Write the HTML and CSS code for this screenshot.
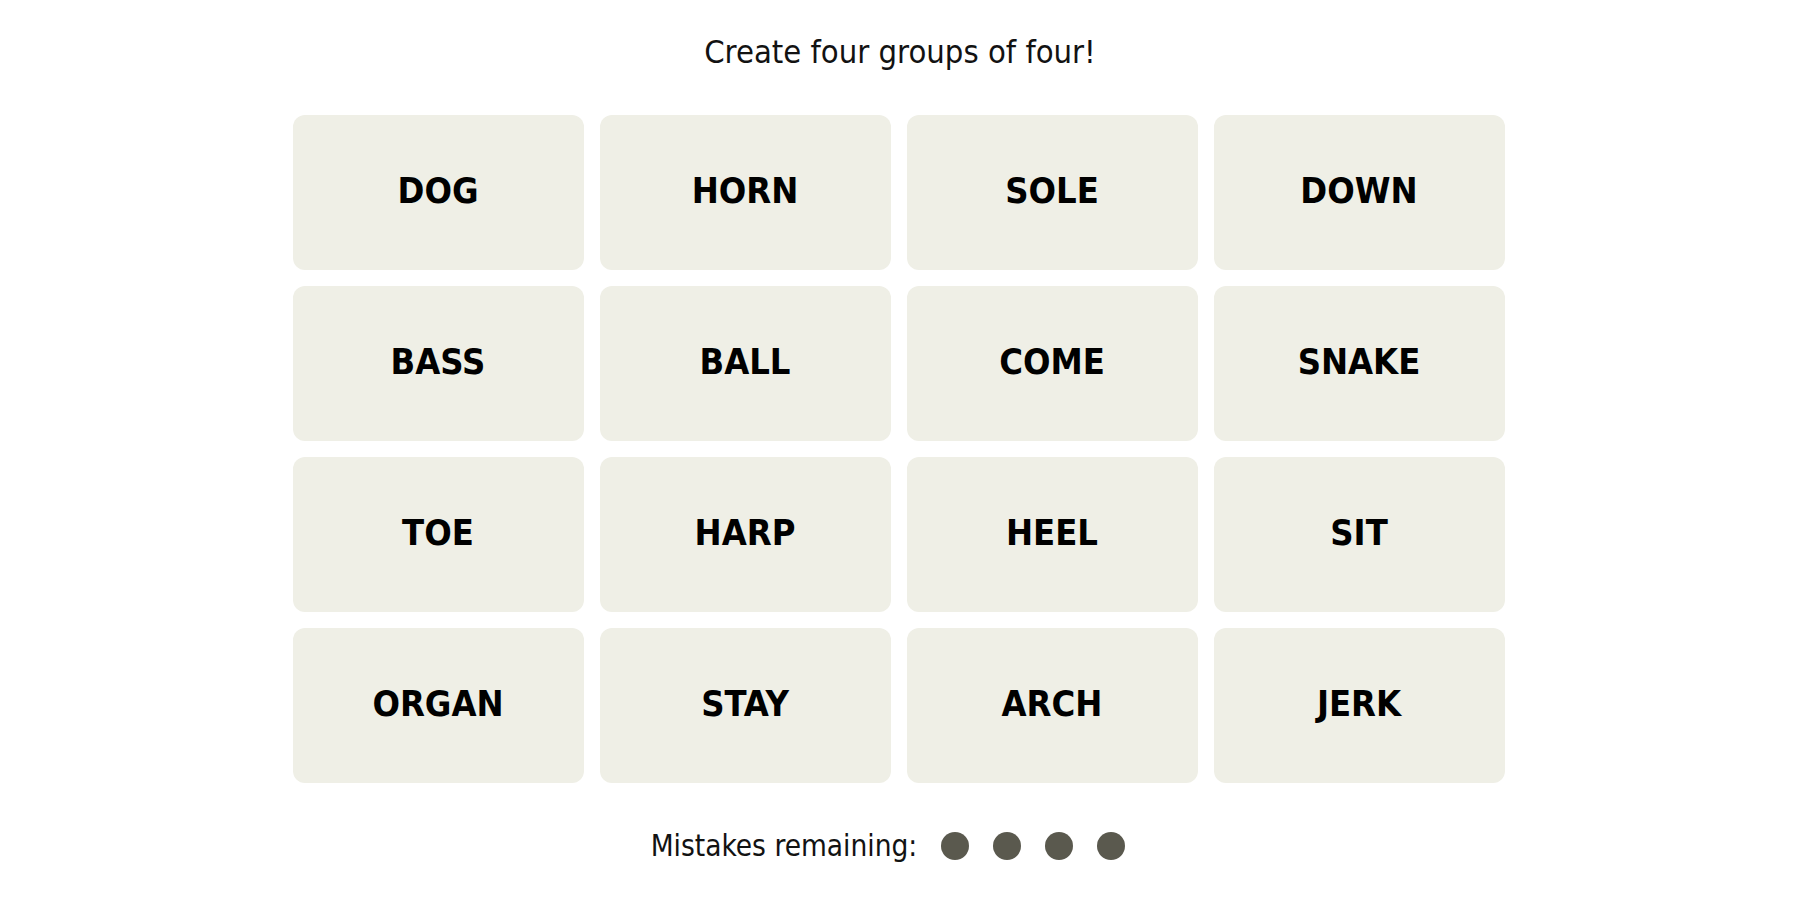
FILE: index.html
```html
<!DOCTYPE html>
<html lang="en">
<head>
<meta charset="utf-8">
<title>Connections</title>
<link rel="stylesheet" href="styles.css">
</head>
<body>
<main class="game">
  <p class="prompt">Create four groups of four!</p>
  <div class="board">
    <div class="tile">DOG</div>
    <div class="tile">HORN</div>
    <div class="tile">SOLE</div>
    <div class="tile">DOWN</div>
    <div class="tile">BASS</div>
    <div class="tile">BALL</div>
    <div class="tile">COME</div>
    <div class="tile">SNAKE</div>
    <div class="tile">TOE</div>
    <div class="tile">HARP</div>
    <div class="tile">HEEL</div>
    <div class="tile">SIT</div>
    <div class="tile">ORGAN</div>
    <div class="tile">STAY</div>
    <div class="tile">ARCH</div>
    <div class="tile">JERK</div>
  </div>
  <div class="mistakes">
    <span class="mistakes-label">Mistakes remaining:</span>
    <span class="dots">
      <span class="dot"></span>
      <span class="dot"></span>
      <span class="dot"></span>
      <span class="dot"></span>
    </span>
  </div>
</main>
</body>
</html>
```

FILE: styles.css
```css
html, body {
  margin: 0;
  padding: 0;
  background: #ffffff;
}

body {
  font-family: "DejaVu Sans Condensed", "Liberation Sans", Arial, sans-serif;
  color: #000;
}

.game {
  display: flex;
  flex-direction: column;
  align-items: center;
  padding-top: 30px;
}

.prompt {
  margin: 0;
  font-size: 32.5px;
  line-height: 44px;
  font-weight: 400;
  color: #121212;
}

.board {
  margin-top: 41px;
  margin-right: 3px;
  display: grid;
  grid-template-columns: repeat(4, 291px);
  grid-auto-rows: 155px;
  gap: 16px;
}

.tile {
  background: #efefe6;
  border-radius: 12px;
  display: flex;
  align-items: center;
  justify-content: center;
  padding-bottom: 4px;
  box-sizing: border-box;
  font-size: 36px;
  font-weight: 700;
  color: #000;
}

.mistakes {
  margin-top: 43px;
  display: flex;
  align-items: center;
  gap: 24px;
  margin-left: -24px;
}

.mistakes-label {
  font-size: 29.5px;
  line-height: 40px;
  color: #121212;
}

.dots {
  display: flex;
  gap: 24px;
}

.dot {
  width: 28px;
  height: 28px;
  border-radius: 50%;
  background: #5a594e;
}
```
